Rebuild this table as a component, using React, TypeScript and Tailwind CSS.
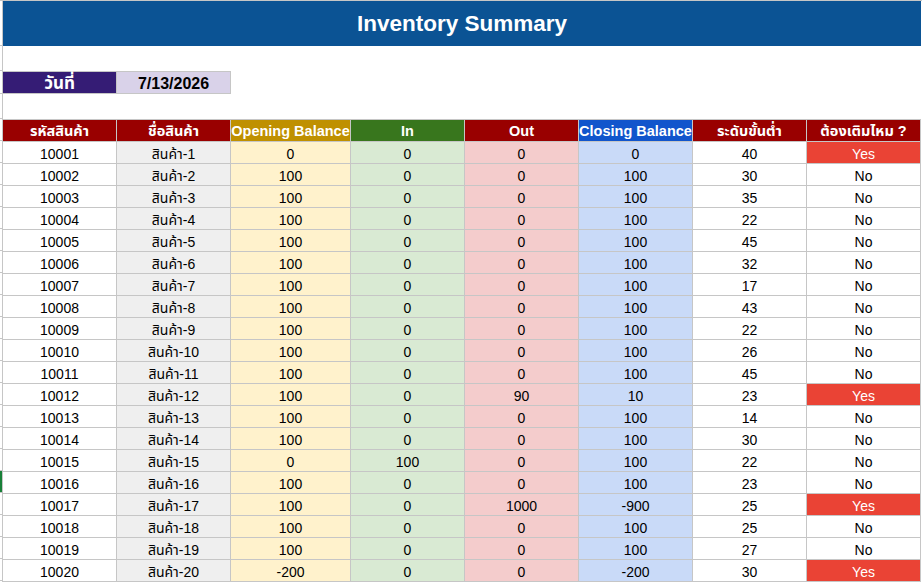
const rows: [number, number, number, number, number, string][] = [
  [0, 0, 0, 0, 40, "Yes"],
  [100, 0, 0, 100, 30, "No"],
  [100, 0, 0, 100, 35, "No"],
  [100, 0, 0, 100, 22, "No"],
  [100, 0, 0, 100, 45, "No"],
  [100, 0, 0, 100, 32, "No"],
  [100, 0, 0, 100, 17, "No"],
  [100, 0, 0, 100, 43, "No"],
  [100, 0, 0, 100, 22, "No"],
  [100, 0, 0, 100, 26, "No"],
  [100, 0, 0, 100, 45, "No"],
  [100, 0, 90, 10, 23, "Yes"],
  [100, 0, 0, 100, 14, "No"],
  [100, 0, 0, 100, 30, "No"],
  [0, 100, 0, 100, 22, "No"],
  [100, 0, 0, 100, 23, "No"],
  [100, 0, 1000, -900, 25, "Yes"],
  [100, 0, 0, 100, 25, "No"],
  [100, 0, 0, 100, 27, "No"],
  [-200, 0, 0, -200, 30, "Yes"],
];

const headers = [
  { label: "รหัสสินค้า", bg: "bg-[#990000]" },
  { label: "ชื่อสินค้า", bg: "bg-[#990000]" },
  { label: "Opening Balance", bg: "bg-[#bf9000]" },
  { label: "In", bg: "bg-[#38761d]" },
  { label: "Out", bg: "bg-[#990000]" },
  { label: "Closing Balance", bg: "bg-[#1155cc]" },
  { label: "ระดับขั้นต่ำ", bg: "bg-[#990000]" },
  { label: "ต้องเติมไหม ?", bg: "bg-[#990000]" },
];

const cell =
  "flex items-center justify-center h-[22px] border-r border-b border-[#c6c6c6] overflow-hidden whitespace-nowrap";

function Gutter() {
  // spreadsheet row-header edge: little ticks at each row boundary
  const heights = [45, 25, 23, 25, 22];
  return (
    <div className="w-[2px] flex flex-col">
      {heights.map((h, i) => (
        <div key={i} style={{ height: h }} className="border-b border-[#c6c6c6]" />
      ))}
      {rows.map((_, i) => (
        <div
          key={"r" + i}
          className={
            i === 15
              ? "h-[22px] border-b border-[#c6c6c6] bg-[#188038]"
              : "h-[22px] border-b border-[#c6c6c6]"
          }
        />
      ))}
    </div>
  );
}

export default function App() {
  return (
    <div className="w-[922px] h-[582px] overflow-hidden bg-white border-t border-[#c6c6c6] font-['Liberation_Sans','Noto_Sans_Thai','Tahoma','DejaVu_Sans',sans-serif] text-black">
      <div className="flex">
        <Gutter />
        <div className="w-[919px] border-l border-[#c6c6c6]">
          {/* title banner */}
          <div className="h-[45px] bg-[#0b5394] flex items-center justify-center">
            <h1 className="text-[22.5px] font-bold text-white">Inventory Summary</h1>
          </div>

          <div className="h-[25px]" />

          {/* date */}
          <div className="flex h-[23px]">
            <div className="w-[114px] flex items-center justify-center pt-[2px] border-y border-r border-[#c6c6c6] bg-[#351c75] text-white text-[17px] font-bold">
              วันที่
            </div>
            <div className="w-[114px] flex items-center justify-center pt-[2px] border-y border-r border-[#c6c6c6] bg-[#d9d2e9] text-[16px] font-bold">
              7/13/2026
            </div>
          </div>

          <div className="h-[25px]" />

          {/* table */}
          <div className="grid grid-cols-[114px_114px_120px_114px_114px_114px_114px_114px] border-t border-[#c6c6c6] text-[14px]">
            {headers.map((h) => (
              <div key={h.label} className={`${cell} pt-[3px] ${h.bg} text-white font-bold text-[14.5px]`}>
                {h.label}
              </div>
            ))}
            {rows.map((r, i) => {
              const n = i + 1;
              const c = `${cell} pt-[4px]`;
              return [
                <div key={`a${n}`} className={`${c} bg-white`}>{10000 + n}</div>,
                <div key={`b${n}`} className={`${c} bg-[#efefef]`}>สินค้า-{n}</div>,
                <div key={`c${n}`} className={`${c} bg-[#fff2cc]`}>{r[0]}</div>,
                <div key={`d${n}`} className={`${c} bg-[#d9ead3]`}>{r[1]}</div>,
                <div key={`e${n}`} className={`${c} bg-[#f4cccc]`}>{r[2]}</div>,
                <div key={`f${n}`} className={`${c} bg-[#c9daf8]`}>{r[3]}</div>,
                <div key={`g${n}`} className={`${c} bg-white`}>{r[4]}</div>,
                <div
                  key={`h${n}`}
                  className={
                    r[5] === "Yes"
                      ? `${c} bg-[#ea4335] text-white`
                      : `${c} bg-white`
                  }
                >
                  {r[5]}
                </div>,
              ];
            })}
          </div>
        </div>
      </div>
    </div>
  );
}
